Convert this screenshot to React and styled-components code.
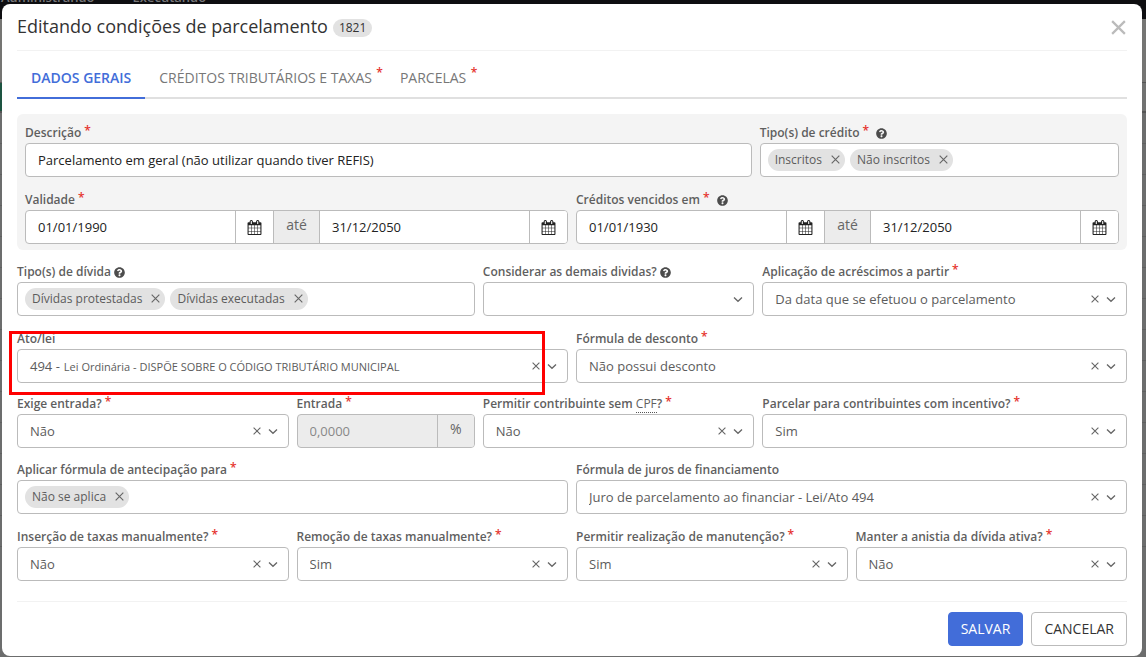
import React, { useId } from "react";
import styled, { createGlobalStyle, css } from "styled-components";
import { FaQuestionCircle } from "react-icons/fa";

const color = {
  text: "#333",
  label: "#5f5f5f",
  value: "#5c5c5c",
  border: "#bbb",
  line: "#f2f2f2",
  panel: "#f4f4f4",
  addon: "#ececec",
  chip: "#e2e2e2",
  primary: "#426dd9",
  danger: "#e5322d",
};

const GlobalStyle = createGlobalStyle`
  *, *::before, *::after { box-sizing: border-box; }
  body {
    margin: 0;
    background: #6c6d6d;
    color: ${color.text};
    font-family: "Open Sans", "Noto Sans", sans-serif;
    font-size: 13px;
  }
  button, input, select { font: inherit; color: inherit; margin: 0; }
`;

/* Dimmed page behind the dialog */
const Backdrop = styled.div`
  position: fixed;
  inset: 0;
  overflow: hidden;
  background: #6c6d6d;
`;

const TopBar = styled.nav`
  display: flex;
  gap: 38px;
  height: 19px;
  padding-left: 1px;
  background: #0e0e11;
  color: #77777a;
  font-size: 13px;
  font-weight: 600;
  line-height: 18px;

  span {
    margin-top: -12px;
  }
`;

const SubBar = styled.div`
  height: 64px;
  background: #757573;
  border-bottom: 1px solid #555;
`;

const ActionBar = styled.div`
  height: 30px;
  background: linear-gradient(90deg, #1d5441 0 2px, #717271 2px);
  border-bottom: 2px solid #555;
`;

const ListRow = styled.div`
  height: 31px;
  border-bottom: 1px solid #5f6060;
`;

const Stage = styled.div`
  position: relative;
  padding: 4px 4px 1px 2px;
`;

const Dialog = styled.main`
  padding: 0 15px 10px;
  background: #fff;
  border-radius: 8px;
`;

const Header = styled.header`
  display: flex;
  align-items: center;
  justify-content: space-between;
  height: 47px;
  padding-right: 1px;
  border-bottom: 1px solid ${color.line};
`;

const TitleGroup = styled.div`
  display: flex;
  align-items: flex-end;
  gap: 5px;
`;

const Title = styled.h1`
  margin: 0;
  padding-bottom: 2px;
  font-size: 18px;
  font-weight: 400;
  line-height: 24px;
`;

const Badge = styled.span`
  margin-bottom: 3px;
  padding: 0 6px;
  border-radius: 9px;
  background: ${color.chip};
  font-size: 12px;
  line-height: 18px;
`;

const IconButton = styled.button`
  display: flex;
  align-items: center;
  justify-content: center;
  flex: none;
  padding: 0;
  border: 0;
  background: none;
  color: ${(p) => p.$color || "#666"};
  cursor: pointer;
`;

const Tabs = styled.nav`
  display: flex;
  margin-top: 6px;
  border-bottom: 2px solid #e0e0e0;
`;

const Tab = styled.button`
  position: relative;
  margin-bottom: -2px;
  padding: 2px 14px 0;
  border: 0;
  border-bottom: 2px solid transparent;
  background: none;
  color: #777;
  font-size: 14px;
  line-height: 38px;
  text-transform: uppercase;
  cursor: pointer;

  ${(p) =>
    p.$active &&
    css`
      border-bottom-color: ${color.primary};
      color: ${color.primary};
      font-weight: 600;
    `}
`;

const TabStar = styled.span`
  position: absolute;
  top: -3px;
  right: 3px;
  color: ${color.danger};
  font-size: 12px;
  font-weight: 600;
`;

const Panel = styled.section`
  margin-top: 15px;
  padding: 9px 8px 6px;
  border-radius: 6px;
  background: ${color.panel};
`;

const Row = styled.div`
  display: grid;
  grid-template-columns: repeat(12, minmax(0, 1fr));
  column-gap: 8px;
  margin-top: ${(p) => p.$top || 0}px;
`;

const Cell = styled.div`
  position: relative;
  grid-column: span ${(p) => p.$span};
`;

const Label = styled.label`
  display: flex;
  align-items: center;
  gap: 3px;
  height: 20px;
  color: ${color.label};
  font-size: 12px;
  font-weight: 600;
  line-height: 20px;
  white-space: nowrap;

  svg {
    width: 11px;
    height: 11px;
    color: #4c4c4c;
  }
`;

const Star = styled.span`
  align-self: flex-start;
  margin-right: 4px;
  color: ${color.danger};
  line-height: 15px;
`;

const Abbr = styled.abbr`
  border-bottom: 1px dotted #555;
  font-weight: 400;
  text-decoration: none;
`;

const LabelText = styled.span`
  line-height: 16px;
`;

const Box = styled.div`
  display: flex;
  align-items: stretch;
  height: 34px;
  border: 1px solid ${color.border};
  border-radius: 4px;
  overflow: hidden;
  background: ${(p) => (p.$disabled ? color.addon : "#fff")};
`;

const TextInput = styled.input`
  flex: 1;
  width: 0;
  min-width: 0;
  padding: 0 12px;
  border: 0;
  outline: 0;
  background: transparent;
  color: #222;

  &:disabled {
    color: #888;
  }
`;

const CalendarButton = styled.button`
  display: flex;
  align-items: center;
  justify-content: center;
  width: 38px;
  padding: 0;
  border: 0;
  border-left: 1px solid ${color.border};
  background: #fff;
  color: #222;
  cursor: pointer;
`;

const Addon = styled.span`
  width: ${(p) => p.$width}px;
  border-left: 1px solid ${color.border};
  border-right: ${(p) => (p.$last ? 0 : 1)}px solid ${color.border};
  background: ${color.addon};
  color: #666;
  font-size: 14px;
  line-height: 28px;
  text-align: center;
`;

const SelectBox = styled(Box)`
  align-items: center;
  gap: 7px;
  padding-right: 10px;
`;

const Prefix = styled.span`
  padding-left: 12px;
  color: ${color.value};
`;

const NativeSelect = styled.select`
  flex: 1;
  min-width: 0;
  height: 100%;
  padding: 0 0 0 ${(p) => (p.$prefixed ? 0 : 12)}px;
  margin-left: ${(p) => (p.$prefixed ? -3 : 0)}px;
  border: 0;
  outline: 0;
  appearance: none;
  background: transparent;
  color: ${color.value};
  font-size: ${(p) => (p.$prefixed ? 11 : 13)}px;
`;

const Chips = styled(Box)`
  align-items: flex-start;
  gap: 5px;
  padding: 5px 7px;
`;

const Chip = styled.span`
  display: flex;
  align-items: center;
  gap: 9px;
  flex: none;
  height: 22px;
  padding: 0 5px 0 7px;
  border-radius: 11px;
  background: ${color.chip};
  color: ${color.value};
  font-size: 12px;
  line-height: 20px;

  button {
    height: 20px;
    align-self: flex-start;
  }
`;

const ChipInput = styled.input`
  flex: 1;
  min-width: 0;
  height: 22px;
  padding: 0;
  border: 0;
  outline: 0;
  background: transparent;
`;

/* Red marker frame drawn over a field */
const Marker = styled.div`
  position: absolute;
  inset: 2px 23px -12px -8px;
  border: 3px solid #f00;
  pointer-events: none;
`;

const Footer = styled.footer`
  display: flex;
  justify-content: flex-end;
  gap: 8px;
  margin-top: 20px;
  padding-top: 10px;
  border-top: 1px solid ${color.line};
`;

const Button = styled.button`
  height: 34px;
  padding: 0 12px 2px;
  border: 1px solid ${(p) => (p.$primary ? color.primary : color.border)};
  border-radius: 4px;
  background: ${(p) => (p.$primary ? color.primary : "#fff")};
  color: ${(p) => (p.$primary ? "#fff" : color.text)};
  font-size: 14px;
  font-weight: ${(p) => (p.$primary ? 500 : 400)};
  text-transform: uppercase;
  cursor: pointer;
`;

function Cross({ size = 8, weight = 1.1 }) {
  return (
    <svg width={size} height={size} viewBox="0 0 8 8" aria-hidden="true">
      <path d="M.6 .6 7.400 7.400M7.400 .6 .6 7.400" fill="none" stroke="currentColor" strokeWidth={weight} />
    </svg>
  );
}

function Chevron() {
  return (
    <svg width="10" height="8" viewBox="0 0 10 8" aria-hidden="true">
      <path d="M1 2.500 5 6.300 9 2.500" fill="none" stroke="#666" strokeWidth="1.300" />
    </svg>
  );
}

function CalendarIcon() {
  return (
    <svg width="15" height="15" viewBox="0 0 1792 1792" fill="currentColor" aria-hidden="true">
      <path d="M192 1664h288v-288h-288v288zm352 0h320v-288h-320v288zm-352-352h288v-320h-288v320zm352 0h320v-320h-320v320zm-352-384h288v-288h-288v288zm736 736h320v-288h-320v288zm-384-736h320v-288h-320v288zm768 736h288v-288h-288v288zm-384-352h320v-320h-320v320zm-352-864v-288q0-13-9.500-22.500t-22.500-9.500h-64q-13 0-22.500 9.500t-9.500 22.500v288q0 13 9.500 22.500t22.500 9.500h64q13 0 22.500-9.500t9.500-22.500zm736 864h288v-320h-288v320zm-384-384h320v-288h-320v288zm384 0h288v-288h-288v288zm32-480v-288q0-13-9.500-22.500t-22.500-9.500h-64q-13 0-22.500 9.500t-9.500 22.500v288q0 13 9.500 22.500t22.500 9.500h64q13 0 22.500-9.500t9.500-22.500zm384-64v1280q0 52-38 90t-90 38h-1408q-52 0-90-38t-38-90v-1280q0-52 38-90t90-38h128v-96q0-66 47-113t113-47h64q66 0 113 47t47 113v96h384v-96q0-66 47-113t113-47h64q66 0 113 47t47 113v96h128q52 0 90 38t38 90z" />
    </svg>
  );
}

function Field({ span, label, required, help, children, marked }) {
  const id = useId();
  return (
    <Cell $span={span}>
      <Label htmlFor={id}>
        <LabelText>{label}</LabelText>
        {required && <Star>*</Star>}
        {help && <FaQuestionCircle aria-hidden="true" />}
      </Label>
      {children(id)}
      {marked && <Marker />}
    </Cell>
  );
}

function SelectField({ value, prefix, ...field }) {
  return (
    <Field {...field}>
      {(id) => (
        <SelectBox>
          {prefix && <Prefix>{prefix}</Prefix>}
          <NativeSelect id={id} $prefixed={Boolean(prefix)}>
            <option>{value}</option>
          </NativeSelect>
          {value && (
            <IconButton type="button" aria-label="Limpar">
              <Cross />
            </IconButton>
          )}
          <Chevron />
        </SelectBox>
      )}
    </Field>
  );
}

function ChipsField({ items, ...field }) {
  return (
    <Field {...field}>
      {(id) => (
        <Chips>
          {items.map((item) => (
            <Chip key={item}>
              {item}
              <IconButton type="button" aria-label={`Remover ${item}`}>
                <Cross size={9} weight={1} />
              </IconButton>
            </Chip>
          ))}
          <ChipInput id={id} type="text" />
        </Chips>
      )}
    </Field>
  );
}

function PeriodField({ from, to, ...field }) {
  return (
    <Field {...field}>
      {(id) => (
        <Box>
          <TextInput id={id} type="text" defaultValue={from} />
          <CalendarButton type="button" aria-label="Abrir calendário inicial">
            <CalendarIcon />
          </CalendarButton>
          <Addon $width={47}>até</Addon>
          <TextInput type="text" defaultValue={to} aria-label="Data final" />
          <CalendarButton type="button" aria-label="Abrir calendário final">
            <CalendarIcon />
          </CalendarButton>
        </Box>
      )}
    </Field>
  );
}

export default function App() {
  return (
    <>
      <GlobalStyle />
      <Backdrop aria-hidden="true">
        <TopBar>
          <span>Administrando</span>
          <span>Executando</span>
        </TopBar>
        <SubBar />
        <ActionBar />
        {Array.from({ length: 14 }, (_, i) => (
          <ListRow key={i} />
        ))}
      </Backdrop>
      <Stage>
        <Dialog>
          <Header>
            <TitleGroup>
              <Title>Editando condições de parcelamento</Title>
              <Badge>1821</Badge>
            </TitleGroup>
            <IconButton type="button" aria-label="Fechar" $color="#bbb">
              <Cross size={15} weight={1.2} />
            </IconButton>
          </Header>

          <Tabs>
            <Tab type="button" $active>Dados gerais</Tab>
            <Tab type="button">
              Créditos tributários e taxas<TabStar>*</TabStar>
            </Tab>
            <Tab type="button">
              Parcelas<TabStar>*</TabStar>
            </Tab>
          </Tabs>

          <Panel>
            <Row>
              <Field span={8} label="Descrição" required>
                {(id) => (
                  <Box>
                    <TextInput id={id} type="text" defaultValue="Parcelamento em geral (não utilizar quando tiver REFIS)" />
                  </Box>
                )}
              </Field>
              <ChipsField span={4} label="Tipo(s) de crédito" required help items={["Inscritos", "Não inscritos"]} />
            </Row>
            <Row $top={13}>
              <PeriodField span={6} label="Validade" required from="01/01/1990" to="31/12/2050" />
              <PeriodField span={6} label="Créditos vencidos em" required help from="01/01/1930" to="31/12/2050" />
            </Row>
          </Panel>

          <Row $top={12}>
            <ChipsField span={5} label="Tipo(s) de dívida" help items={["Dívidas protestadas", "Dívidas executadas"]} />
            <SelectField span={3} label="Considerar as demais dividas?" help value="" />
            <SelectField span={4} label="Aplicação de acréscimos a partir" required value="Da data que se efetuou o parcelamento" />
          </Row>
          <Row $top={13}>
            <SelectField span={6} label="Ato/lei" marked prefix="494 -" value="Lei Ordinária - DISPÕE SOBRE O CÓDIGO TRIBUTÁRIO MUNICIPAL" />
            <SelectField span={6} label="Fórmula de desconto" required value="Não possui desconto" />
          </Row>
          <Row $top={11}>
            <SelectField span={3} label="Exige entrada?" required value="Não" />
            <Field span={2} label="Entrada" required>
              {(id) => (
                <Box $disabled>
                  <TextInput id={id} type="text" defaultValue="0,0000" disabled />
                  <Addon $width={37} $last>%</Addon>
                </Box>
              )}
            </Field>
            <SelectField span={3} label={<>Permitir contribuinte sem <Abbr>CPF</Abbr>?</>} required value="Não" />
            <SelectField span={4} label="Parcelar para contribuintes com incentivo?" required value="Sim" />
          </Row>
          <Row $top={12}>
            <ChipsField span={6} label="Aplicar fórmula de antecipação para" required items={["Não se aplica"]} />
            <SelectField span={6} label="Fórmula de juros de financiamento" value="Juro de parcelamento ao financiar - Lei/Ato 494" />
          </Row>
          <Row $top={13}>
            <SelectField span={3} label="Inserção de taxas manualmente?" required value="Não" />
            <SelectField span={3} label="Remoção de taxas manualmente?" required value="Sim" />
            <SelectField span={3} label="Permitir realização de manutenção?" required value="Sim" />
            <SelectField span={3} label="Manter a anistia da dívida ativa?" required value="Não" />
          </Row>

          <Footer>
            <Button type="button" $primary>Salvar</Button>
            <Button type="button">Cancelar</Button>
          </Footer>
        </Dialog>
      </Stage>
    </>
  );
}
